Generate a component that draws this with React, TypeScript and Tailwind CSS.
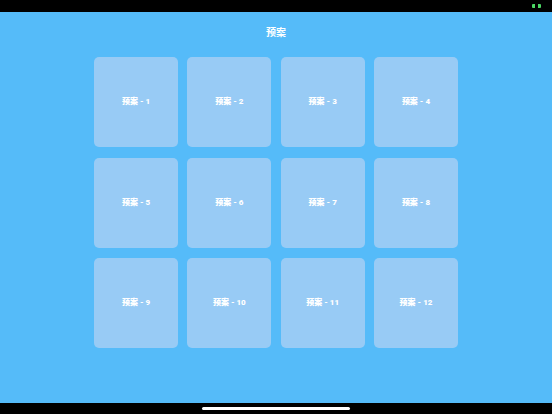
import React from 'react';

const plans = Array.from({ length: 12 }, (_, i) => `预案 - ${i + 1}`);

export default function App() {
  return (
    <div
      className="w-[552px] h-[414px] flex flex-col bg-black overflow-hidden"
      style={{ fontFamily: 'Roboto, "Noto Sans CJK SC", sans-serif' }}
    >
      {/* 状态栏 */}
      <div className="h-[12px] flex items-center justify-end pr-[11px]">
        <div className="flex items-center gap-[1px]">
          <div className="w-[3px] h-[4px] bg-[#4cd964] rounded-l-[1px]" />
          <div className="w-[1px] h-[4px]" />
          <div className="w-[3px] h-[4px] bg-[#4cd964] rounded-r-[1px]" />
        </div>
      </div>

      {/* 主体 */}
      <div className="h-[391px] bg-[#55bbf9] flex flex-col items-center">
        <div className="h-[45px] pt-[15px] text-[10px] leading-[12px] font-bold text-white">预案</div>
        <div className="grid grid-cols-4 w-[364px] gap-x-[9.3px] gap-y-[10.5px]">
          {plans.map((name) => (
            <div
              key={name}
              className="h-[90px] rounded-[5px] bg-[#98cbf5] flex items-center justify-center text-[8px] font-black text-white"
            >
              {name}
            </div>
          ))}
        </div>
      </div>

      {/* 底部指示条 */}
      <div className="flex-1 flex items-center justify-center">
        <div className="w-[148px] h-[3px] rounded-full bg-white" />
      </div>
    </div>
  );
}
